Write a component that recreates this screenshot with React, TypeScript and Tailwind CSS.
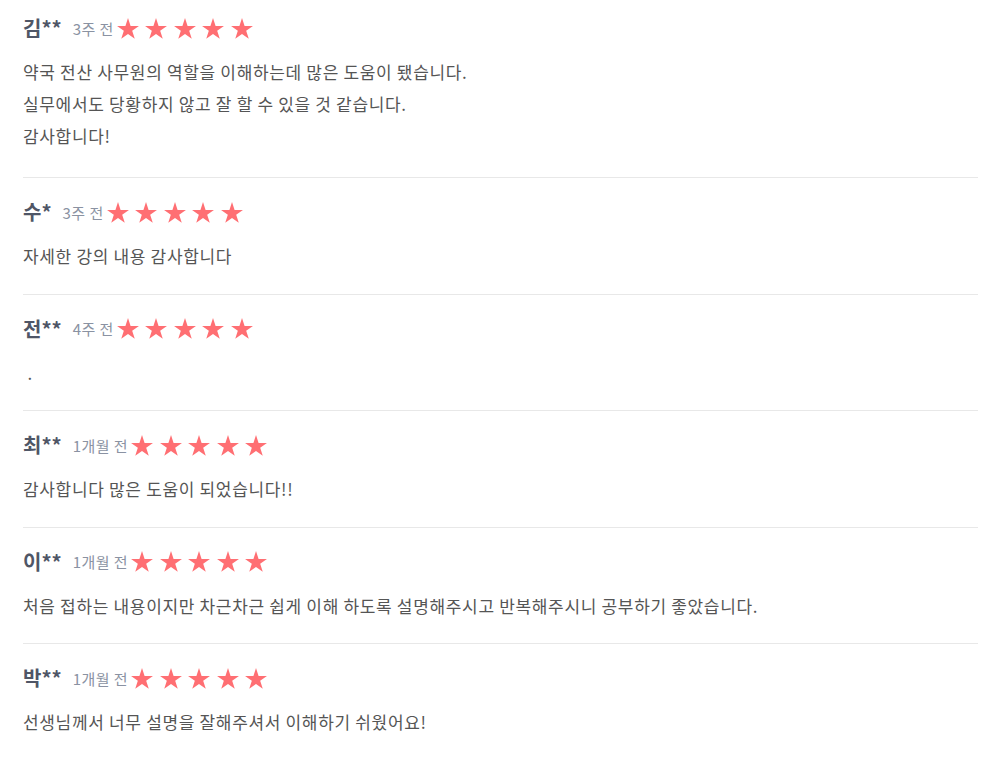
import React from "react";

type Review = { name: string; date: string; lines: string[] };

const reviews: Review[] = [
  {
    name: "김**",
    date: "3주 전",
    lines: [
      "약국 전산 사무원의 역할을 이해하는데 많은 도움이 됐습니다.",
      "실무에서도 당황하지 않고 잘 할 수 있을 것 같습니다.",
      "감사합니다!",
    ],
  },
  { name: "수*", date: "3주 전", lines: ["자세한 강의 내용 감사합니다"] },
  { name: "전**", date: "4주 전", lines: ["\u00a0."] },
  { name: "최**", date: "1개월 전", lines: ["감사합니다 많은 도움이 되었습니다!!"] },
  {
    name: "이**",
    date: "1개월 전",
    lines: [
      "처음 접하는 내용이지만 차근차근 쉽게 이해 하도록 설명해주시고 반복해주시니 공부하기 좋았습니다.",
    ],
  },
  { name: "박**", date: "1개월 전", lines: ["선생님께서 너무 설명을 잘해주셔서 이해하기 쉬웠어요!"] },
];

function Star() {
  return (
    <svg width="22" height="21" viewBox="0 0 22 21" className="shrink-0">
      <polygon
        fill="#ff6f73"
        points="11,0 13.58,7.95 21.94,7.95 15.18,12.86 17.76,20.8 11,15.89 4.24,20.8 6.82,12.86 0.06,7.95 8.42,7.95"
      />
    </svg>
  );
}

export default function App() {
  return (
    <div
      className="w-[997px] min-h-[758px] bg-white pl-[23px] pr-[19px]"
      style={{ fontFamily: '"Noto Sans CJK KR", "Noto Sans", sans-serif' }}
    >
      {reviews.map((r, i) => (
        <div
          key={i}
          className={
            (i === 0 ? "pt-[14px] pb-[25px] " : "pt-[20px] pb-[21.5px] ") +
            (i < reviews.length - 1 ? "border-b border-[#e8e8e8]" : "")
          }
        >
          <div className="flex items-center h-[28px]">
            <span className="text-[20px] font-bold text-[#4f5666] leading-none">{r.name}</span>
            <span className="ml-[11px] mr-[3px] text-[15px] tracking-[0.45px] text-[#8a92a2] leading-none">
              {r.date}
            </span>
            <div className="flex items-center gap-[6.5px]">
              <Star />
              <Star />
              <Star />
              <Star />
              <Star />
            </div>
          </div>
          <div className="mt-[14px] text-[17px] tracking-[0.67px] leading-[32px] text-[#555555]">
            {r.lines.map((l, j) => (
              <p key={j}>{l}</p>
            ))}
          </div>
        </div>
      ))}
    </div>
  );
}
